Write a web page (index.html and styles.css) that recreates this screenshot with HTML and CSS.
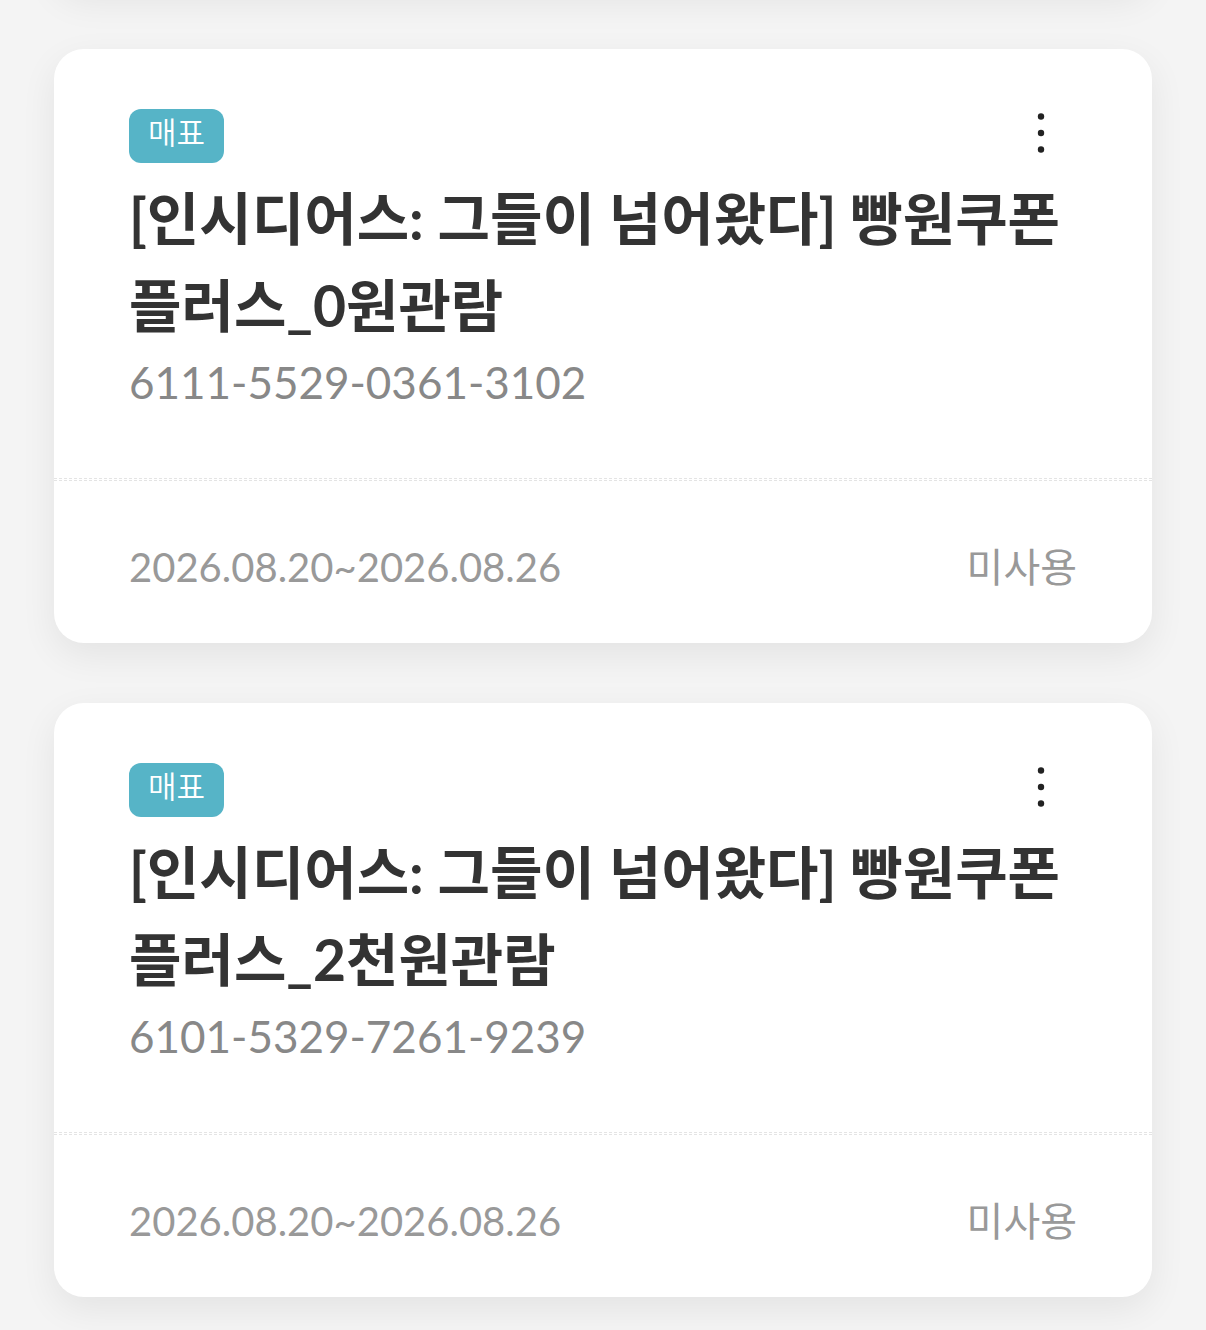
FILE: index.html
```html
<!DOCTYPE html>
<html lang="ko">
<head>
    <meta charset="UTF-8">
    <meta name="viewport" content="width=device-width, initial-scale=1">
    <title>쿠폰</title>
    <link rel="stylesheet" href="styles.css">
</head>
<body>
    <main class="coupon-list">
        <div class="coupon coupon-prev"></div>

        <article class="coupon">
            <div class="coupon-body">
                <div class="coupon-top">
                    <span class="badge">매표</span>
                    <button type="button" class="more" aria-label="더보기">
                        <svg width="8" height="42" viewBox="0 0 8 42" fill="#222">
                            <circle cx="4" cy="4.5" r="3.2"/>
                            <circle cx="4" cy="21" r="3.2"/>
                            <circle cx="4" cy="37.5" r="3.2"/>
                        </svg>
                    </button>
                </div>
                <h2 class="title">[인시디어스: 그들이 넘어왔다] 빵원쿠폰 플러스_0원관람</h2>
                <p class="number">6111-5529-0361-3102</p>
            </div>
            <div class="divider"></div>
            <div class="coupon-foot">
                <span class="period">2026.08.20~2026.08.26</span>
                <span class="status">미사용</span>
            </div>
        </article>

        <article class="coupon">
            <div class="coupon-body">
                <div class="coupon-top">
                    <span class="badge">매표</span>
                    <button type="button" class="more" aria-label="더보기">
                        <svg width="8" height="42" viewBox="0 0 8 42" fill="#222">
                            <circle cx="4" cy="4.5" r="3.2"/>
                            <circle cx="4" cy="21" r="3.2"/>
                            <circle cx="4" cy="37.5" r="3.2"/>
                        </svg>
                    </button>
                </div>
                <h2 class="title">[인시디어스: 그들이 넘어왔다] 빵원쿠폰 플러스_2천원관람</h2>
                <p class="number">6101-5329-7261-9239</p>
            </div>
            <div class="divider"></div>
            <div class="coupon-foot">
                <span class="period">2026.08.20~2026.08.26</span>
                <span class="status">미사용</span>
            </div>
        </article>
    </main>
</body>
</html>
```
FILE: styles.css
```css
* {
    box-sizing: border-box;
}
body {
    margin: 0;
    background: #f4f4f4;
    color: #333;
    font-family: Lato, "Noto Sans CJK KR", sans-serif;
}
.coupon-list {
    display: flex;
    flex-direction: column;
    gap: 60px;
    padding: 0 54px 33px;
    overflow: hidden;
}
.coupon {
    background: #fff;
    border-radius: 30px;
    box-shadow: 0 12px 36px rgba(0, 0, 0, 0.07);
}
/* end of the card that is scrolled out above */
.coupon-prev {
    height: 200px;
    margin-top: -211px;
}
.coupon-body {
    padding: 60px 75px 63px;
}
.coupon-top {
    display: flex;
    justify-content: space-between;
    align-items: flex-start;
}
.badge {
    padding: 0 19px 7px;
    border-radius: 12px;
    background: #56b4c7;
    color: #fff;
    font-size: 31px;
    font-weight: 350;
    line-height: 47px;
}
.more {
    display: flex;
    justify-content: center;
    width: 72px;
    padding: 3px 0;
    border: 0;
    background: none;
    cursor: pointer;
}
.title {
    margin: 12px 0 0;
    font-size: 57px;
    font-weight: 700;
    line-height: 87px;
    word-break: keep-all;
}
.number {
    margin: 0;
    color: #888;
    font-size: 44px;
    line-height: 66px;
}
.divider {
    height: 3px;
    border-top: 1px dashed #e4e4e4;
    border-bottom: 1px dashed #e4e4e4;
}
.coupon-foot {
    display: flex;
    justify-content: space-between;
    align-items: center;
    padding: 56px 75px 45px;
    color: #999;
    font-size: 40px;
    line-height: 61px;
}
```
